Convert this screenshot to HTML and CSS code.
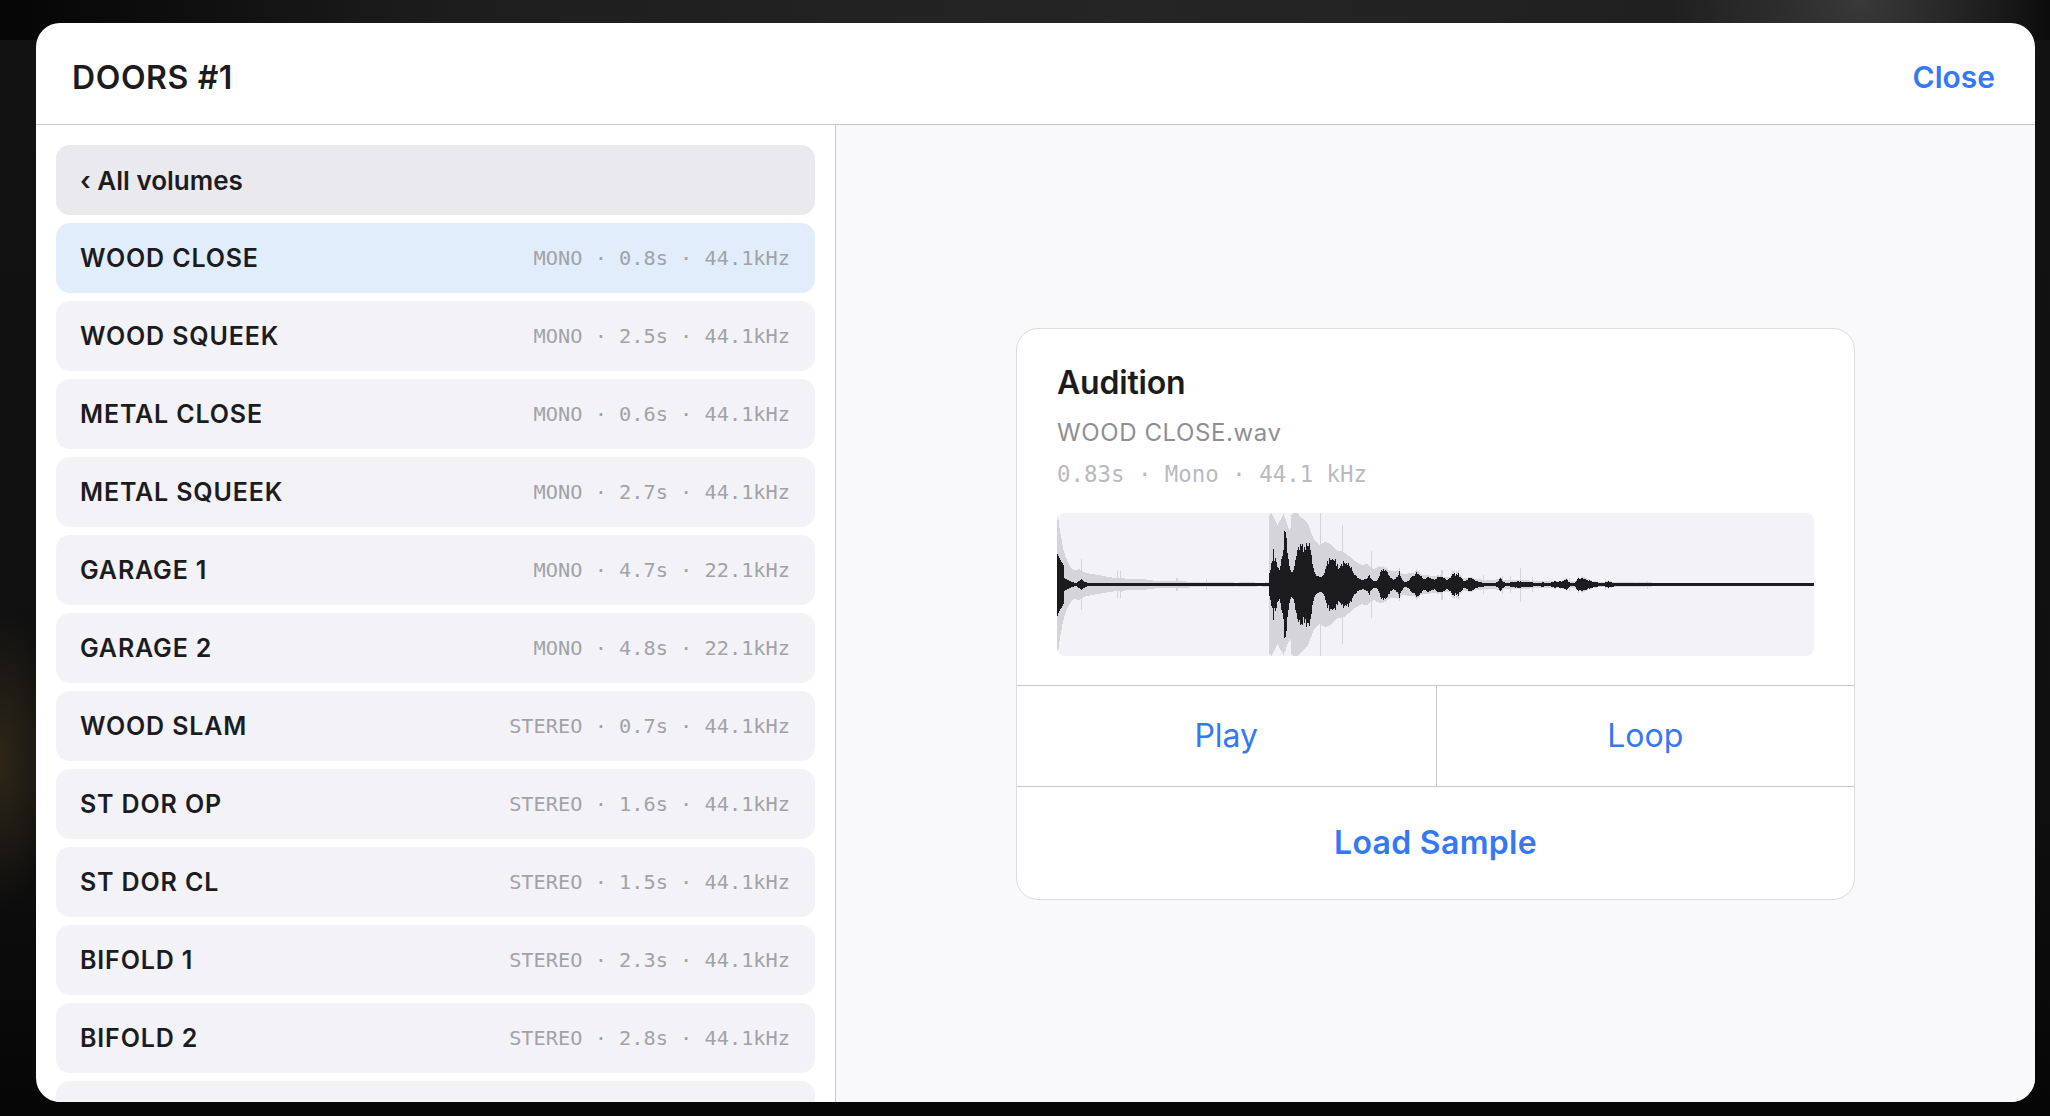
FILE: index.html
```html
<!DOCTYPE html>
<html lang="en">
<head>
  <meta charset="UTF-8" />
  <meta name="viewport" content="width=device-width, initial-scale=1.0"/>
  <title>DOORS #1</title>
  <link rel="stylesheet" href="styles.css">
</head>
<body>
<div class="modal">
  <header class="modal-header">
    <h1>DOORS #1</h1>
    <button class="close-btn">Close</button>
  </header>

  <div class="modal-body">
    <aside class="sample-list">
      <button class="back-row">&lsaquo; All volumes</button>

      <div class="sample-row selected">
        <span class="sample-name">WOOD CLOSE</span>
        <span class="sample-meta">MONO · 0.8s · 44.1kHz</span>
      </div>
      <div class="sample-row">
        <span class="sample-name">WOOD SQUEEK</span>
        <span class="sample-meta">MONO · 2.5s · 44.1kHz</span>
      </div>
      <div class="sample-row">
        <span class="sample-name">METAL CLOSE</span>
        <span class="sample-meta">MONO · 0.6s · 44.1kHz</span>
      </div>
      <div class="sample-row">
        <span class="sample-name">METAL SQUEEK</span>
        <span class="sample-meta">MONO · 2.7s · 44.1kHz</span>
      </div>
      <div class="sample-row">
        <span class="sample-name">GARAGE 1</span>
        <span class="sample-meta">MONO · 4.7s · 22.1kHz</span>
      </div>
      <div class="sample-row">
        <span class="sample-name">GARAGE 2</span>
        <span class="sample-meta">MONO · 4.8s · 22.1kHz</span>
      </div>
      <div class="sample-row">
        <span class="sample-name">WOOD SLAM</span>
        <span class="sample-meta">STEREO · 0.7s · 44.1kHz</span>
      </div>
      <div class="sample-row">
        <span class="sample-name">ST DOR OP</span>
        <span class="sample-meta">STEREO · 1.6s · 44.1kHz</span>
      </div>
      <div class="sample-row">
        <span class="sample-name">ST DOR CL</span>
        <span class="sample-meta">STEREO · 1.5s · 44.1kHz</span>
      </div>
      <div class="sample-row">
        <span class="sample-name">BIFOLD 1</span>
        <span class="sample-meta">STEREO · 2.3s · 44.1kHz</span>
      </div>
      <div class="sample-row">
        <span class="sample-name">BIFOLD 2</span>
        <span class="sample-meta">STEREO · 2.8s · 44.1kHz</span>
      </div>
      <div class="sample-row">
        <span class="sample-name">SLIDING</span>
        <span class="sample-meta">STEREO · 1.9s · 44.1kHz</span>
      </div>
    </aside>

    <main class="audition-pane">
      <section class="audition-card">
        <div class="card-info">
          <h2>Audition</h2>
          <div class="file-name">WOOD CLOSE.wav</div>
          <div class="file-meta">0.83s · Mono · 44.1 kHz</div>
          <div class="waveform">
            <svg id="waveform" viewBox="0 0 758 143" preserveAspectRatio="none"></svg>
          </div>
        </div>
        <div class="card-actions">
          <button class="action-btn">Play</button>
          <button class="action-btn">Loop</button>
        </div>
        <button class="load-btn">Load Sample</button>
      </section>
    </main>
  </div>
</div>

<script>
  // draw the waveform preview, one column per pixel
  (function () {
    const svg = document.getElementById('waveform');
    const W = 758, H = 143, mid = H / 2;
    let seed = 11;
    function rand() {
      seed = (seed * 16807) % 2147483647;
      return seed / 2147483647;
    }
    const knots = [];
    for (let i = 0; i < W / 6 + 3; i++) knots.push(rand());
    function burst(x) {
      const i = Math.floor(x / 6), t = x / 6 - i;
      return knots[i] * (1 - t) + knots[i + 1] * t;
    }

    let grey = '', dark = '';
    for (let x = 0; x < W; x++) {
      // first hit at the very start
      let b = 28 * Math.exp(-x / 12) + 3 * Math.exp(-x / 120);
      let g = 71 * Math.exp(-x / 5) + 20 * Math.exp(-x / 50) + 2;

      // second, louder hit
      const d = x - 229;
      if (x >= 212) {
        const dd = Math.max(d, 0);
        const attack = d < 0 ? 0.25 + 0.75 * (x - 212) / 17 : 1;
        const fade = d > 300 ? Math.max(0, 1 - (d - 300) / 90) : 1;
        b += attack * fade * (50 * Math.exp(-dd / 30) + 19 * Math.exp(-dd / 240));
        if (x < 234) g = 72;
        else g += fade * (80 * Math.exp(-dd / 45) + 12 * Math.exp(-dd / 150));
      }

      if (x > 6) {
        const n = burst(x);
        b *= 0.2 + 0.9 * n * n * (0.8 + 0.4 * rand());
      }
      g *= 0.75 + 0.25 * burst(x + 2) + (rand() < 0.04 ? 0.8 : 0);
      if (x === 464) g = 17;
      if (x > 595) g = 0;

      b = Math.max(b, 1.5);
      g = Math.max(g, b * 1.25);

      grey += 'M' + (x + 0.5) + ' ' + (mid - g).toFixed(1) + 'V' + (mid + g).toFixed(1);
      dark += 'M' + (x + 0.5) + ' ' + (mid - b).toFixed(1) + 'V' + (mid + b).toFixed(1);
    }

    svg.innerHTML =
      '<path d="' + grey + '" stroke="#d4d4d9" stroke-width="1.05" shape-rendering="crispEdges"/>' +
      '<path d="' + dark + '" stroke="#1c1c1e" stroke-width="1.05" shape-rendering="crispEdges"/>' +
      '<rect x="0" y="' + (mid - 1.5) + '" width="' + W + '" height="3" fill="#1c1c1e"/>';
  })();
</script>
</body>
</html>
```

FILE: styles.css
```css
* { box-sizing: border-box; }

body {
  margin: 0;
  height: 100vh;
  padding: 23px 15px 14px 36px;
  font-family: Inter, "Noto Sans", sans-serif;
  color: #1c1c1e;
  overflow: hidden;
  background:
    radial-gradient(circle at 1860px 0, #393939 0, rgba(57,57,57,0) 190px),
    radial-gradient(ellipse 60px 150px at 0 760px, #2e2718 0, rgba(46,39,24,0) 100%),
    linear-gradient(90deg, #050505 0, #1d1d1d 22%, #252525 55%, #1f1f1f 85%, #0c0c0c 100%) top / 100% 40px no-repeat,
    linear-gradient(180deg, #121212 0, #101010 70%, #060606 100%);
}

button {
  font-family: inherit;
  background: none;
  border: none;
  padding: 0;
  cursor: pointer;
}

.modal {
  height: 100%;
  background: #fff;
  border-radius: 24px;
  overflow: hidden;
  display: flex;
  flex-direction: column;
}

.modal-header {
  height: 102px;
  flex-shrink: 0;
  display: flex;
  align-items: center;
  justify-content: space-between;
  padding: 7px 40px 0 36px;
  border-bottom: 1px solid #c8c8cc;
}
.modal-header h1 {
  margin: 0;
  font-size: 32px;
  font-weight: 600;
  letter-spacing: 0.6px;
}
.close-btn {
  color: #3478f6;
  font-size: 30px;
  font-weight: 600;
}

.modal-body {
  flex: 1;
  min-height: 0;
  display: flex;
}

/* left column */
.sample-list {
  width: 800px;
  flex-shrink: 0;
  border-right: 1px solid #c8c8cc;
  padding: 20px 20px;
  display: flex;
  flex-direction: column;
  gap: 8px;
  overflow: hidden;
}
.back-row, .sample-row {
  flex-shrink: 0;
  height: 70px;
  border-radius: 14px;
  padding: 0 25px 0 24px;
  display: flex;
  align-items: center;
  justify-content: space-between;
}
.back-row {
  background: #e9e9ee;
  color: #1c1c1e;
  font-size: 26px;
  font-weight: 600;
  text-align: left;
}
.sample-row { background: #f2f2f7; }
.sample-row.selected { background: #e1edfb; }
.sample-name {
  font-size: 25px;
  font-weight: 600;
  letter-spacing: 0.85px;
}
.sample-meta {
  font-family: "DejaVu Sans Mono", "Liberation Mono", monospace;
  font-size: 20.3px;
  color: #a2a2a7;
}

/* right side */
.audition-pane {
  flex: 1;
  background: #f9f9fb;
  display: flex;
  align-items: center;
  justify-content: center;
}
.audition-card {
  width: 839px;
  background: #fff;
  border: 1px solid #dcdce0;
  border-radius: 22px;
  overflow: hidden;
}
.card-info { padding: 34px 40px 29px 40px; }
.card-info h2 {
  margin: 0;
  font-size: 32px;
  line-height: 40px;
  font-weight: 600;
  letter-spacing: -0.2px;
}
.file-name {
  margin-top: 14px;
  font-size: 24px;
  line-height: 32px;
  letter-spacing: 0.6px;
  color: #8e8e93;
}
.file-meta {
  margin-top: 10px;
  font-family: "DejaVu Sans Mono", "Liberation Mono", monospace;
  font-size: 22.4px;
  line-height: 30px;
  color: #b9b9be;
}
.waveform {
  margin-top: 24px;
  height: 143px;
  background: #f2f2f7;
  border-radius: 8px;
  overflow: hidden;
}
.waveform svg { display: block; width: 100%; height: 100%; }

.card-actions {
  display: grid;
  grid-template-columns: 1fr 1fr;
  border-top: 1px solid #c8c8cc;
  border-bottom: 1px solid #c8c8cc;
}
.action-btn {
  height: 100px;
  color: #3478f6;
  font-size: 32px;
}
.action-btn + .action-btn { border-left: 1px solid #c8c8cc; }
.load-btn {
  display: block;
  width: 100%;
  height: 112px;
  color: #3478f6;
  font-size: 32px;
  font-weight: 600;
  letter-spacing: 0.3px;
}
```
